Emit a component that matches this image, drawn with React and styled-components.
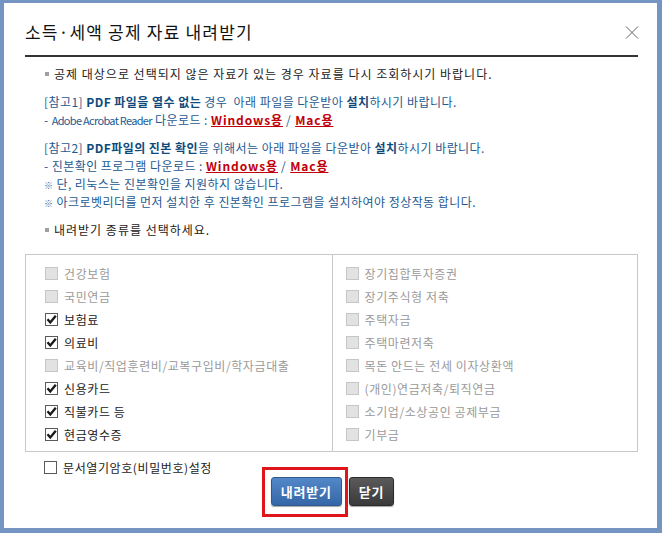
import React from "react";
import styled, { createGlobalStyle } from "styled-components";

const Global = createGlobalStyle`
  html, body { margin: 0; padding: 0; }
  body {
    background: #7495c2;
    font-family: "Noto Sans CJK KR", "Noto Sans", sans-serif;
    font-size: 12px;
    color: #222;
  }
  * { box-sizing: border-box; }
`;

const Frame = styled.div`
  width: 662px;
  height: 533px;
  padding: 3px 5px 5px 4px;
  background: #7495c2;
`;

const Dialog = styled.div`
  background: #fff;
  height: 100%;
  padding: 0 19px 0 21px;
  display: flex;
  flex-direction: column;
`;

const Header = styled.div`
  display: flex;
  align-items: center;
  justify-content: space-between;
  padding: 19px 0 13px;
  border-bottom: 2px solid #333;
`;

const Title = styled.h1`
  margin: 0;
  font-size: 17px;
  line-height: 20px;
  font-weight: 400;
  color: #111;
  letter-spacing: 1.2px;
`;

const CloseBtn = styled.button`
  width: 14px;
  height: 14px;
  padding: 0;
  border: 0;
  background: none;
  margin-right: -1px;
  display: flex;
  align-items: center;
  justify-content: center;
`;

const Body = styled.div`
  padding: 8px 0 0;
  display: flex;
  flex-direction: column;
`;

const Bullet = styled.p`
  margin: ${(p) => p.$mt || 0}px 0 0 19px;
  line-height: 18px;
  height: 18px;
  color: #222;
  letter-spacing: 1px;
  display: flex;
  align-items: center;
  &::before {
    content: "";
    width: 4px;
    height: 4px;
    background: #a0a0a0;
    margin: 0 5px 0 1px;
  }
`;

const Note = styled.div`
  margin: 10px 0 0 19px;
  color: #1d5a91;
  line-height: 18px;
  letter-spacing: 0.45px;
`;

const NoteLine = styled.div`
  white-space: nowrap;
  height: 18px;
`;

const Strong = styled.b`
  color: #0f4a7c;
  font-weight: 700;
`;

const Latin = styled.span`
  font-size: 11px;
  line-height: 1;
  letter-spacing: -0.7px;
`;

const DownLink = styled.a`
  color: #c0000a;
  font-weight: 700;
  letter-spacing: 0.9px;
  text-decoration: underline;
  cursor: pointer;
`;

const Slash = styled.span`
  color: #1d5a91;
  margin: 0 4px 0 3px;
`;

const Mark = styled.span`
  color: #3b6fa3;
  font-size: 9px;
  line-height: 1;
  margin-right: 3px;
`;

const Box = styled.div`
  margin-top: 15px;
  border: 1px solid #c8c8c8;
  display: grid;
  grid-template-columns: 1fr 1fr;
`;

const Col = styled.div`
  padding: 7px 0 5px ${(p) => p.$pl}px;
  border-left: ${(p) => (p.$divider ? "1px solid #c8c8c8" : "0")};
`;

const Row = styled.label`
  display: flex;
  align-items: center;
  height: ${(p) => p.$h || 23}px;
  color: ${(p) => (p.$disabled ? "#9a9a9a" : "#222")};
  letter-spacing: 0.6px;
  white-space: nowrap;
`;

const Check = styled.span`
  width: 13px;
  height: 13px;
  margin-right: 6px;
  flex: none;
  display: flex;
  align-items: center;
  justify-content: center;
  border: 1px solid ${(p) => (p.$disabled ? "#c6c6c6" : "#5a5a5a")};
  background: ${(p) => (p.$disabled ? "#e2e2e2" : "#fff")};
`;

const PwRow = styled.div`
  margin: 6px 0 0 19px;
`;

const Buttons = styled.div`
  display: flex;
  justify-content: center;
  gap: 7px;
  margin: 1px 0 0 2px;
`;

const Highlight = styled.div`
  position: relative;
  display: flex;
  &::after {
    content: "";
    position: absolute;
    left: -9px;
    right: -6px;
    top: -10px;
    bottom: -11px;
    border: 3px solid #e0141b;
    pointer-events: none;
  }
`;

const Btn = styled.button`
  height: 29px;
  padding: 0 ${(p) => p.$px}px;
  border: 1px solid ${(p) => (p.$primary ? "#2d5990" : "#2a2a2a")};
  border-radius: 3px;
  background: ${(p) =>
    p.$primary
      ? "linear-gradient(#5287c8, #3567a8)"
      : "linear-gradient(#5a5a5a, #3a3a3a)"};
  box-shadow: 0 1px 1px rgba(0, 0, 0, 0.35);
  color: #fff;
  font-family: "Noto Sans CJK KR", sans-serif;
  font-size: 13px;
  font-weight: 700;
  letter-spacing: 0.8px;
  cursor: pointer;
`;

const CheckIcon = () => (
  <svg width="11" height="11" viewBox="0 0 11 11">
    <path d="M1.5 5.3 L4.3 8.5 L9.8 1.8" fill="none" stroke="#1a1a1a" strokeWidth="2.4" />
  </svg>
);

const Item = ({ label, checked, disabled }) => (
  <Row $disabled={disabled}>
    <Check $disabled={disabled}>{checked && <CheckIcon />}</Check>
    {label}
  </Row>
);

const left = [
  { label: "건강보험", disabled: true },
  { label: "국민연금", disabled: true },
  { label: "보험료", checked: true },
  { label: "의료비", checked: true },
  { label: "교육비/직업훈련비/교복구입비/학자금대출", disabled: true },
  { label: "신용카드", checked: true },
  { label: "직불카드 등", checked: true },
  { label: "현금영수증", checked: true },
];

const right = [
  "장기집합투자증권",
  "장기주식형 저축",
  "주택자금",
  "주택마련저축",
  "목돈 안드는 전세 이자상환액",
  "(개인)연금저축/퇴직연금",
  "소기업/소상공인 공제부금",
  "기부금",
];

export default function App() {
  return (
    <>
      <Global />
      <Frame>
        <Dialog>
          <Header>
            <Title>소득·세액 공제 자료 내려받기</Title>
            <CloseBtn aria-label="닫기">
              <svg width="14" height="13" viewBox="0 0 14 13">
                <path d="M1 0.5 L13 12.5 M13 0.5 L1 12.5" stroke="#666" strokeWidth="1" fill="none" />
              </svg>
            </CloseBtn>
          </Header>
          <Body>
            <Bullet>공제 대상으로 선택되지 않은 자료가 있는 경우 자료를 다시 조회하시기 바랍니다.</Bullet>
            <Note>
              <NoteLine>
                [참고1] <Strong>PDF 파일을 열수 없는</Strong> 경우&nbsp; 아래 파일을 다운받아 <Strong>설치</Strong>하시기 바랍니다.
              </NoteLine>
              <NoteLine>
                - <Latin>Adobe Acrobat Reader</Latin> 다운로드 : <DownLink>Windows용</DownLink>
                <Slash>/</Slash>
                <DownLink>Mac용</DownLink>
              </NoteLine>
            </Note>
            <Note>
              <NoteLine>
                [참고2] <Strong>PDF파일의 진본 확인</Strong>을 위해서는 아래 파일을 다운받아 <Strong>설치</Strong>하시기 바랍니다.
              </NoteLine>
              <NoteLine>
                - 진본확인 프로그램 다운로드 : <DownLink>Windows용</DownLink>
                <Slash>/</Slash>
                <DownLink>Mac용</DownLink>
              </NoteLine>
              <NoteLine>
                <Mark>※</Mark>단, 리눅스는 진본확인을 지원하지 않습니다.
              </NoteLine>
              <NoteLine>
                <Mark>※</Mark>아크로벳리더를 먼저 설치한 후 진본확인 프로그램을 설치하여야 정상작동 합니다.
              </NoteLine>
            </Note>
            <Bullet $mt={10}>내려받기 종류를 선택하세요.</Bullet>
            <Box>
              <Col $pl={19}>
                {left.map((it) => (
                  <Item key={it.label} {...it} />
                ))}
              </Col>
              <Col $pl={13} $divider>
                {right.map((l) => (
                  <Item key={l} label={l} disabled />
                ))}
              </Col>
            </Box>
            <PwRow>
              <Row $h={18}>
                <Check />
                문서열기암호(비밀번호)설정
              </Row>
            </PwRow>
            <Buttons>
              <Highlight>
                <Btn $primary $px={9}>내려받기</Btn>
              </Highlight>
              <Btn $px={9}>닫기</Btn>
            </Buttons>
          </Body>
        </Dialog>
      </Frame>
    </>
  );
}
